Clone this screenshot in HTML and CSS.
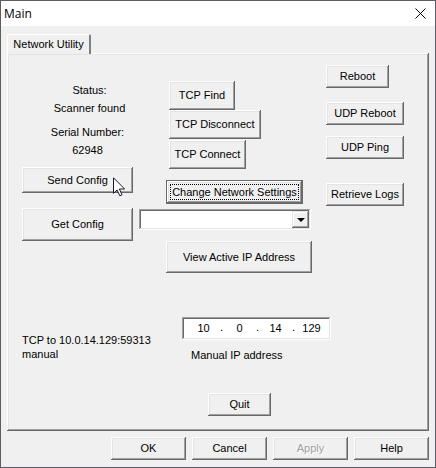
FILE: index.html
```html
<!DOCTYPE html>
<html lang="en">
<head>
    <meta charset="UTF-8">
    <meta name="viewport" content="width=device-width, initial-scale=1.0">
    <title>Main</title>
    <link rel="stylesheet" href="styles.css">
</head>
<body>
    <div class="window">
        <header class="title-bar">
            <h1>Main</h1>
            <button type="button" class="close-btn" aria-label="Close">
                <svg width="11" height="11" viewBox="0 0 11 11" aria-hidden="true">
                    <path d="M0.5 0.5 L10.5 10.5 M10.5 0.5 L0.5 10.5" stroke="#000" stroke-width="1" fill="none"/>
                </svg>
            </button>
        </header>

        <div class="tabs" role="tablist">
            <button type="button" class="tab" role="tab" id="tab-network" aria-selected="true" aria-controls="network">Network Utility</button>
        </div>

        <main class="panel" role="tabpanel" id="network" aria-labelledby="tab-network">
            <div class="top">
                <div class="column device">
                    <dl class="status">
                        <dt>Status:</dt>
                        <dd>Scanner found</dd>
                    </dl>
                    <dl class="status serial">
                        <dt>Serial Number:</dt>
                        <dd>62948</dd>
                    </dl>
                    <div class="send">
                        <button type="button" class="btn wide">Send Config</button>
                        <svg class="pointer" width="13" height="20" viewBox="0 0 13 20" aria-hidden="true">
                            <path d="M0.5 0.8 V16.3 L4.1 12.9 L6.8 18.8 L9 17.8 L6.4 12 H11.6 Z" fill="#fff" stroke="#1a1a2a" stroke-width="1"/>
                        </svg>
                    </div>
                    <button type="button" class="btn wide get">Get Config</button>
                </div>

                <div class="column network">
                    <div class="tcp">
                        <button type="button" class="btn find">TCP Find</button>
                        <button type="button" class="btn disconnect">TCP Disconnect</button>
                        <button type="button" class="btn connect">TCP Connect</button>
                    </div>
                    <button type="button" class="btn default">Change Network Settings</button>
                    <div class="combo">
                        <select aria-label="Configuration">
                            <option></option>
                        </select>
                        <span class="arrow"></span>
                    </div>
                    <button type="button" class="btn view">View Active IP Address</button>
                </div>

                <div class="column device-actions">
                    <button type="button" class="btn small">Reboot</button>
                    <button type="button" class="btn medium">UDP Reboot</button>
                    <button type="button" class="btn medium">UDP Ping</button>
                    <button type="button" class="btn medium logs">Retrieve Logs</button>
                </div>
            </div>

            <div class="bottom">
                <p class="connection">TCP to 10.0.14.129:59313<br>manual</p>
                <div class="column manual">
                    <div class="ip-box">
                        <input type="text" id="ip1" value="10" maxlength="3">
                        <span>.</span>
                        <input type="text" value="0" maxlength="3" aria-label="Second octet">
                        <span>.</span>
                        <input type="text" value="14" maxlength="3" aria-label="Third octet">
                        <span>.</span>
                        <input type="text" value="129" maxlength="3" aria-label="Fourth octet">
                    </div>
                    <label for="ip1">Manual IP address</label>
                    <button type="button" class="btn small quit">Quit</button>
                </div>
            </div>
        </main>

        <footer class="actions">
            <button type="button" class="btn">OK</button>
            <button type="button" class="btn">Cancel</button>
            <button type="button" class="btn" disabled>Apply</button>
            <button type="button" class="btn">Help</button>
        </footer>
    </div>
</body>
</html>
```
FILE: styles.css
```css
* {
    box-sizing: border-box;
}

body {
    margin: 0;
    font-family: "Liberation Sans", Arial, sans-serif;
    font-size: 11px;
    line-height: 14px;
    color: #000;
    background: #f0f0f0;
}

button, input, select {
    font: inherit;
    color: inherit;
}

.window {
    min-height: 100vh;
    border: 1px solid #5c5c62;
    background: #f0f0f0;
}

/* Title bar */
.title-bar {
    display: flex;
    justify-content: space-between;
    align-items: center;
    height: 25px;
    padding: 0 9px 0 3px;
    background: #fff;
}

.title-bar h1 {
    margin: 0;
    font-family: "Open Sans", "Noto Sans", sans-serif;
    font-size: 12px;
    font-weight: normal;
}

.close-btn {
    display: flex;
    padding: 0;
    border: none;
    background: none;
}

/* Tabs */
.tabs {
    display: flex;
    padding: 8px 6px 0;
}

.tab {
    position: relative;
    z-index: 1;
    width: 84px;
    height: 20px;
    margin-bottom: -1px;
    padding: 0 0 2px;
    border: 1px solid #fff;
    border-right: 2px solid #808080;
    border-bottom: none;
    border-radius: 2px 2px 0 0;
    background: #f0f0f0;
    white-space: nowrap;
}

.panel {
    margin: 0 6px;
    padding: 12px 0 15px 15px;
    box-shadow: inset -1px -1px #696969, inset 1px 1px #fff, inset -2px -2px #a0a0a0, inset 2px 2px #e3e3e3;
}

.top {
    display: grid;
    grid-template-columns: 117fr 187fr 103fr;
}

.column {
    display: flex;
    flex-direction: column;
    align-items: flex-start;
}

/* Raised buttons */
.btn {
    height: 23px;
    padding: 0 0 1px;
    border: none;
    background: #f0f0f0;
    box-shadow: inset -1px -1px #696969, inset 1px 1px #fff, inset -2px -2px #a0a0a0, inset 2px 2px #e3e3e3;
    white-space: nowrap;
}

.btn:active {
    box-shadow: inset 1px 1px #696969, inset -1px -1px #fff;
}

.btn:disabled {
    color: #a0a0a0;
    text-shadow: 1px 1px #fff;
}

.small {
    width: 63px;
}

.medium {
    width: 78px;
}

.wide {
    width: 111px;
    height: 26px;
}

/* Left column */
.device {
    padding-top: 18px;
}

.status {
    width: 111px;
    margin: 0 0 10px;
    padding-left: 24px;
    text-align: center;
    white-space: nowrap;
}

.serial {
    padding-left: 20px;
}

.status dd {
    margin: 4px 0 0;
}

.send {
    position: relative;
    display: flex;
    margin-bottom: 15px;
}

.pointer {
    position: absolute;
    top: 10px;
    left: 91px;
}

.get {
    height: 33px;
}

/* Middle column */
.network {
    padding-top: 16px;
}

.tcp {
    display: flex;
    flex-direction: column;
    margin: 0 0 11px 30px;
}

.tcp .btn {
    height: 29px;
}

.find {
    width: 66px;
}

.disconnect {
    width: 92px;
}

.tcp .connect {
    width: 77px;
    margin-top: 1px;
}

.default {
    position: relative;
    width: 137px;
    height: 24px;
    margin-left: 27px;
    border: 1px solid #696969;
}

.default::after {
    content: "";
    position: absolute;
    inset: 3px;
    border: 1px dotted #000;
}

.combo {
    position: relative;
    width: 172px;
    height: 21px;
    margin: 5px 0 11px;
}

.combo select {
    width: 100%;
    height: 100%;
    padding: 0 20px 0 4px;
    border: none;
    border-radius: 0;
    appearance: none;
    background: #fff;
}

.combo select, .ip-box {
    box-shadow: inset -1px -1px #fff, inset 1px 1px #a0a0a0, inset -2px -2px #e3e3e3, inset 2px 2px #696969;
}

.arrow {
    position: absolute;
    top: 2px;
    right: 2px;
    bottom: 2px;
    display: flex;
    justify-content: center;
    align-items: center;
    width: 17px;
    background: #f0f0f0;
    box-shadow: inset -1px -1px #696969, inset 1px 1px #e3e3e3, inset -2px -2px #a0a0a0, inset 2px 2px #fff;
    pointer-events: none;
}

.arrow::before {
    content: "";
    border: 4px solid transparent;
    border-top-color: #000;
    border-bottom: none;
}

.view {
    width: 146px;
    height: 32px;
    margin-left: 27px;
}

/* Right column */
.device-actions .medium {
    margin-top: 11px;
}

.device-actions .small {
    margin-bottom: 3px;
}

.device-actions .logs {
    margin-top: 24px;
}

/* Manual address */
.bottom {
    display: grid;
    grid-template-columns: 160fr 247fr;
    margin-top: 44px;
}

.connection {
    margin: 16px 0 0;
}

.ip-box {
    display: flex;
    width: 149px;
    height: 23px;
    padding: 2px 2px 4px 5px;
    background: #fff;
}

.ip-box input {
    width: 33px;
    padding: 0;
    border: none;
    outline: none;
    background: none;
    text-align: center;
}

.ip-box span {
    width: 3px;
    line-height: 17px;
}

.manual label {
    margin: 8px 0 0 9px;
}

.quit {
    margin: 31px 0 0 26px;
}

/* Dialog buttons */
.actions {
    display: flex;
    justify-content: flex-end;
    gap: 6px;
    padding: 6px 6px 7px;
}

.actions .btn {
    width: 75px;
}
```
